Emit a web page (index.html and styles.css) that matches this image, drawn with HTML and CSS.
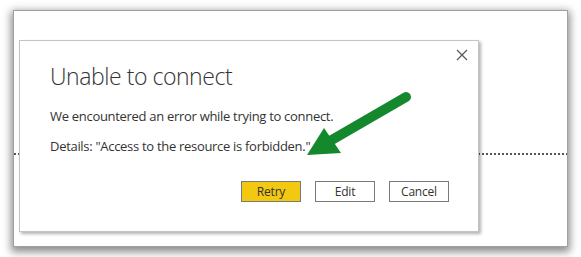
FILE: index.html
```html
<!DOCTYPE html>
<html>
<head>
<meta charset="utf-8">
  <title>Unable to connect</title>
  <link rel="stylesheet" href="styles.css">
</head>
<body>
<div class="frame">
  <div class="dialog">
    <button class="close" aria-label="Close">
      <svg width="12" height="12" viewBox="0 0 12 12"><path d="M1 1L11 11M11 1L1 11" stroke="#555" stroke-width="1.2" fill="none"/></svg>
    </button>
    <h1 class="title">Unable to connect</h1>
    <p class="msg">We encountered an error while trying to connect.</p>
    <p class="msg">Details: "Access to the resource is forbidden."</p>
    <div class="buttons">
      <button class="btn primary">Retry</button>
      <button class="btn">Edit</button>
      <button class="btn">Cancel</button>
    </div>
  </div>
</div>
<!-- annotation arrow drawn over the screenshot -->
<svg class="arrow" width="581" height="257" viewBox="0 0 581 257">
  <line x1="406" y1="97" x2="330" y2="141" stroke="#14882c" stroke-width="10" stroke-linecap="round"/>
  <polygon points="307,155 324,128 341,153" fill="#14882c"/>
</svg>
</body>
</html>
```
FILE: styles.css
```css
* {
  box-sizing: border-box;
  margin: 0;
  padding: 0;
}

body {
  width: 581px;
  height: 257px;
  background-color: #fff;
  padding: 10px 13px;
  font-family: "Segoe UI", "Open Sans", "Noto Sans", sans-serif;
  color: #333;
}

.frame {
  width: 555px;
  height: 237px;
  background-color: #fff;
  border: 1px solid #a0a0a0;
  box-shadow: 0 3px 8px 2px rgba(0, 0, 0, 0.45);
  padding: 29px 0 0 5px;
  /* dotted guide line behind the dialog */
  background-image: repeating-linear-gradient(to right, #555 0 2px, transparent 2px 4px);
  background-size: 100% 2px;
  background-position: 0 142px;
  background-repeat: no-repeat;
}

.dialog {
  position: relative;
  width: 460px;
  height: 192px;
  background-color: #fff;
  border: 1px solid #c4c4c4;
  box-shadow: 2px 2px 3px rgba(0, 0, 0, 0.3);
  padding: 20px 0 0 30px;
}

.close {
  position: absolute;
  top: 6px;
  right: 8px;
  width: 16px;
  height: 16px;
  border: none;
  background: none;
  display: flex;
  justify-content: center;
  align-items: center;
}

.title {
  font-size: 23px;
  font-weight: 300;
  line-height: 30px;
  letter-spacing: -0.45px;
  color: #333;
  margin-bottom: 16px;
}

.msg {
  font-size: 13px;
  line-height: 18px;
  letter-spacing: -0.3px;
  margin-bottom: 12px;
}

.buttons {
  display: flex;
  justify-content: flex-end;
  gap: 14px;
  padding-right: 29px;
  margin-top: 26px;
}

.btn {
  width: 60px;
  height: 21px;
  background-color: #fff;
  border: 1px solid #7a7a7a;
  font-family: inherit;
  font-size: 12px;
  letter-spacing: -0.2px;
  color: #333;
}

.btn.primary {
  background-color: #f2c811;
}

.arrow {
  position: absolute;
  top: 0;
  left: 0;
}
```
